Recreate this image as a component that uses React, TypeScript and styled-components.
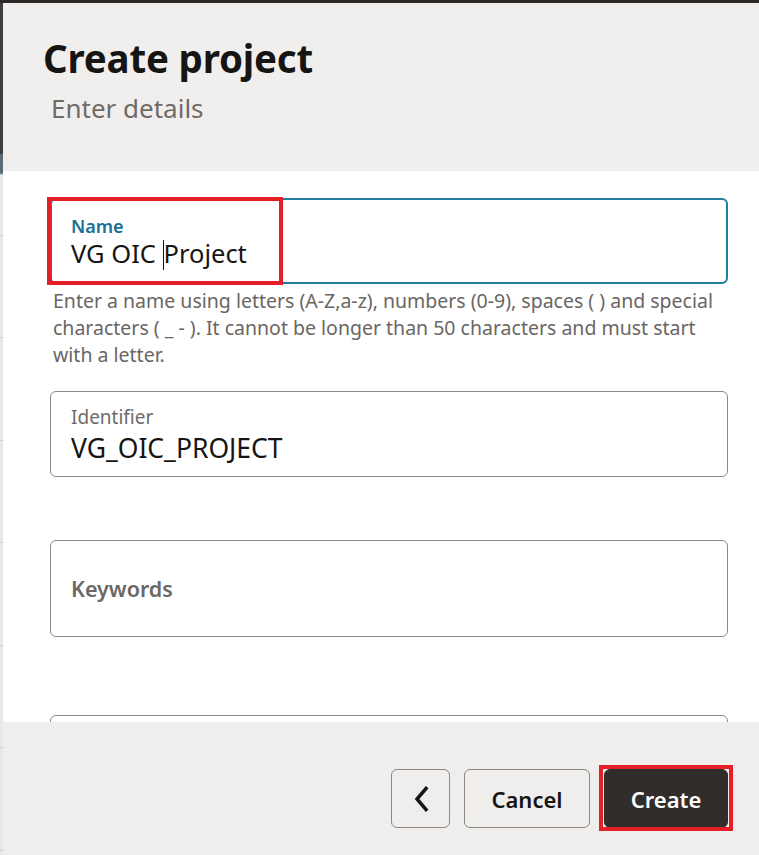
import React from "react";
import styled, { createGlobalStyle } from "styled-components";

const Global = createGlobalStyle`
  html, body { margin: 0; padding: 0; }
  body {
    font-family: "Noto Sans", "Open Sans", Arial, sans-serif;
    background: #ffffff;
    width: 759px;
    height: 855px;
    overflow: hidden;
  }
  * { box-sizing: border-box; }
`;

const Page = styled.div`
  width: 759px;
  height: 855px;
  display: flex;
  flex-direction: column;
`;

const TopBar = styled.div`
  height: 3px;
  background: #2b2826;
  flex: none;
`;

const Body = styled.div`
  flex: 1;
  display: flex;
  min-height: 0;
`;

const LeftRail = styled.div`
  width: 3px;
  flex: none;
  background:
    linear-gradient(
      to bottom,
      #3d3d42 0px,
      #3d3d42 150px,
      #5b6b76 152px,
      #5b6b76 170px,
      transparent 172px,
      transparent 100%
    ),
    repeating-linear-gradient(
      to bottom,
      transparent 0px,
      transparent 27px,
      #cfcfcf 27px,
      #cfcfcf 28px,
      transparent 28px,
      transparent 102.5px
    ),
    #e9e9e9;
`;

const Panel = styled.div`
  flex: 1;
  display: flex;
  flex-direction: column;
  min-width: 0;
`;

const Header = styled.header`
  height: 168px;
  flex: none;
  background: #f1efed;
  padding: 31px 0 0 40px;
`;

const Title = styled.h1`
  margin: 0;
  font-size: 38.5px;
  line-height: 48px;
  font-weight: 700;
  color: #161513;
  letter-spacing: -0.2px;
`;

const Subtitle = styled.div`
  margin: 9px 0 0 8px;
  font-size: 26px;
  line-height: 34px;
  color: #6f6b68;
`;

const Content = styled.main`
  flex: 1;
  min-height: 0;
  overflow: hidden;
  background: #ffffff;
  padding: 27px 31px 0 47px;
  display: flex;
  flex-direction: column;
`;

const Field = styled.div<{ $focused?: boolean; $height: number; $mt?: number; $center?: boolean }>`
  position: relative;
  flex: none;
  height: ${(p) => p.$height}px;
  margin-top: ${(p) => p.$mt ?? 0}px;
  border: ${(p) => (p.$focused ? "2px solid #227c9e" : "1px solid #8c8986")};
  border-radius: 6px;
  padding: ${(p) =>
    p.$focused ? "15px 19px 0 19px" : p.$center ? "0 20px" : "13px 20px 0 20px"};
  display: flex;
  flex-direction: column;
  justify-content: ${(p) => (p.$center ? "center" : "flex-start")};
`;

const Label = styled.div<{ $focused?: boolean }>`
  font-size: ${(p) => (p.$focused ? 18 : 19)}px;
  line-height: ${(p) => (p.$focused ? 22 : 24)}px;
  font-weight: ${(p) => (p.$focused ? 600 : 400)};
  color: ${(p) => (p.$focused ? "#1b6f93" : "#6f6b68")};
`;

const Value = styled.div<{ $size: number; $lh: number; $mt?: number }>`
  margin-top: ${(p) => p.$mt ?? 0}px;
  font-size: ${(p) => p.$size}px;
  line-height: ${(p) => p.$lh}px;
  color: #161513;
  white-space: nowrap;
`;

const Caret = styled.span`
  display: inline-block;
  width: 1px;
  height: 30px;
  background: #161513;
  vertical-align: -7px;
`;

const Placeholder = styled.div`
  font-size: 21.5px;
  line-height: 30px;
  font-weight: 600;
  color: #6b6865;
`;

const Help = styled.div`
  margin: 3px 0 0 3px;
  font-size: 19.5px;
  line-height: 27px;
  color: #6a6664;
  white-space: nowrap;
`;

const Highlight = styled.div<{ $t: number; $l: number; $r: number; $b: number }>`
  position: absolute;
  top: ${(p) => p.$t}px;
  left: ${(p) => p.$l}px;
  right: ${(p) => p.$r}px;
  bottom: ${(p) => p.$b}px;
  border: 4px solid #e61e28;
  pointer-events: none;
`;

const NameHighlight = styled.div`
  position: absolute;
  top: -3px;
  left: -5px;
  width: 236px;
  height: 88px;
  border: 4px solid #e61e28;
  pointer-events: none;
`;

const Footer = styled.footer`
  height: 133px;
  flex: none;
  background: #f0eeec;
  display: flex;
  justify-content: flex-end;
  align-items: flex-start;
  gap: 14px;
  padding: 47px 31px 0 0;
`;

const Button = styled.button<{ $primary?: boolean; $w: number }>`
  position: relative;
  width: ${(p) => p.$w}px;
  height: 59px;
  border-radius: 6px;
  border: 1px solid ${(p) => (p.$primary ? "#312d2a" : "#8c8986")};
  background: ${(p) => (p.$primary ? "#312d2a" : "transparent")};
  color: ${(p) => (p.$primary ? "#ffffff" : "#161513")};
  font-family: inherit;
  font-size: 22px;
  font-weight: 600;
  display: flex;
  align-items: center;
  justify-content: center;
  padding: 0;
  cursor: pointer;
`;

export default function App() {
  return (
    <Page>
      <Global />
      <TopBar />
      <Body>
        <LeftRail />
        <Panel>
          <Header>
            <Title>Create project</Title>
            <Subtitle>Enter details</Subtitle>
          </Header>
          <Content>
            <Field $focused $height={86}>
              <Label $focused>Name</Label>
              <Value $size={25.5} $lh={32}>
                VG OIC <Caret />Project
              </Value>
              <NameHighlight />
            </Field>
            <Help>
              Enter a name using letters (A-Z,a-z), numbers (0-9), spaces ( ) and special
              <br />
              characters ( _ - ). It cannot be longer than 50 characters and must start
              <br />
              with a letter.
            </Help>
            <Field $height={86} $mt={23}>
              <Label>Identifier</Label>
              <Value $size={26.5} $lh={30} $mt={4}>VG_OIC_PROJECT</Value>
            </Field>
            <Field $height={97} $mt={63} $center>
              <Placeholder>Keywords</Placeholder>
            </Field>
            <Field $height={98} $mt={78} />
          </Content>
          <Footer>
            <Button $w={59} aria-label="Back">
              <svg width="16" height="26" viewBox="0 0 16 26" fill="none">
                <path
                  d="M13 2.5 L4 13 L13 23.5"
                  stroke="#161513"
                  strokeWidth="3.5"
                  strokeLinecap="square"
                  strokeLinejoin="miter"
                />
              </svg>
            </Button>
            <Button $w={126}>Cancel</Button>
            <Button $w={124} $primary>
              Create
              <Highlight $t={-5} $l={-6} $r={-6} $b={-4} />
            </Button>
          </Footer>
        </Panel>
      </Body>
    </Page>
  );
}
